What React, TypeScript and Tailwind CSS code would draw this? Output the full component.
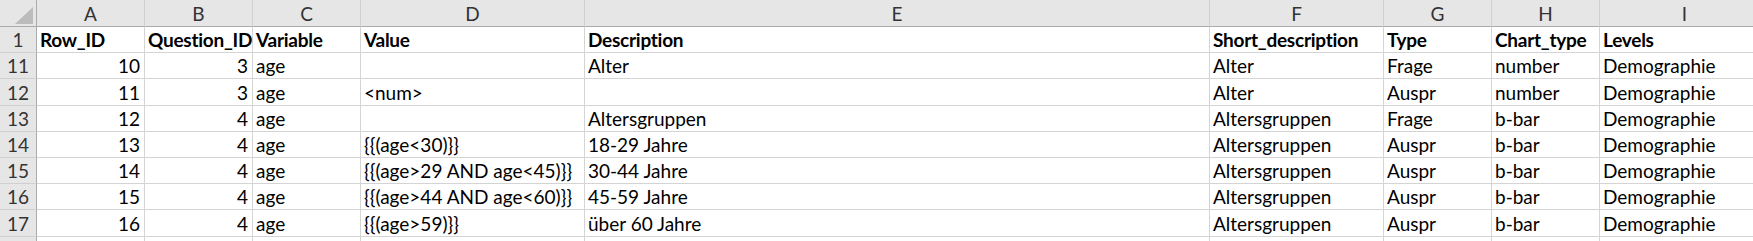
import React from "react";

const cols = ["A", "B", "C", "D", "E", "F", "G", "H", "I"];
const header = ["Row_ID", "Question_ID", "Variable", "Value", "Description", "Short_description", "Type", "Chart_type", "Levels"];
type Row = { n: string; c: (string | number)[] };
const rows: Row[] = [
  { n: "11", c: [10, 3, "age", "", "Alter", "Alter", "Frage", "number", "Demographie"] },
  { n: "12", c: [11, 3, "age", "<num>", "", "Alter", "Auspr", "number", "Demographie"] },
  { n: "13", c: [12, 4, "age", "", "Altersgruppen", "Altersgruppen", "Frage", "b-bar", "Demographie"] },
  { n: "14", c: [13, 4, "age", "{{(age<30)}}", "18-29 Jahre", "Altersgruppen", "Auspr", "b-bar", "Demographie"] },
  { n: "15", c: [14, 4, "age", "{{(age>29 AND age<45)}}", "30-44 Jahre", "Altersgruppen", "Auspr", "b-bar", "Demographie"] },
  { n: "16", c: [15, 4, "age", "{{(age>44 AND age<60)}}", "45-59 Jahre", "Altersgruppen", "Auspr", "b-bar", "Demographie"] },
  { n: "17", c: [16, 4, "age", "{{(age>59)}}", "über 60 Jahre", "Altersgruppen", "Auspr", "b-bar", "Demographie"] },
  { n: "", c: ["", "", "", "", "", "", "", "", ""] },
];

const font = { fontFamily: "Lato, 'Open Sans', sans-serif" };

export default function App() {
  return (
    <div className="w-[1753px] h-[241px] overflow-hidden bg-white text-black" style={font}>
      <div className="grid w-[1770px] grid-cols-[37px_108px_108px_108px_224px_625px_174px_108px_108px_170px] grid-rows-[27px_26px_26px_27px_26px_26px_26px_26px_27px_26px] text-[19px] leading-none">
        {/* corner */}
        <div className="relative bg-[#e6e6e6] border-r border-b border-[#ababab]">
          <svg className="absolute left-[15px] top-[7px]" width="19" height="18" viewBox="0 0 19 18">
            <polygon points="18,0 18,17 0,17" fill="#bcbcbc" />
          </svg>
        </div>
        {cols.map((c) => (
          <div
            key={c}
            className="flex items-center justify-center bg-[#e6e6e6] border-b border-b-[#ababab] border-r border-r-[#d0d0d0] text-[#333] pt-[1px]"
          >
            {c}
          </div>
        ))}
        {/* row 1 */}
        <div className="flex items-end justify-center pb-[3px] bg-[#e6e6e6] border-r border-r-[#ababab] border-b border-b-[#d0d0d0] text-[#333]">1</div>
        {header.map((h) => (
          <div key={h} className="flex items-end pb-[3px] pl-[3px] border-r border-b border-[#d4d4d4] font-bold tracking-[-0.25px] whitespace-nowrap overflow-visible">
            {h}
          </div>
        ))}
        {rows.map((r, i) => (
          <React.Fragment key={i}>
            <div className="flex items-end justify-center pb-[3px] bg-[#e6e6e6] border-r border-r-[#ababab] border-b border-b-[#d0d0d0] text-[#333]">
              {r.n}
            </div>
            {r.c.map((v, j) => (
              <div
                key={j}
                className={
                  typeof v === "number"
                    ? "flex items-end justify-end pb-[3px] pr-[4px] border-r border-b border-[#d4d4d4] whitespace-nowrap"
                    : "flex items-end pb-[3px] pl-[3px] border-r border-b border-[#d4d4d4] whitespace-nowrap"
                }
              >
                {v}
              </div>
            ))}
          </React.Fragment>
        ))}
      </div>
    </div>
  );
}
